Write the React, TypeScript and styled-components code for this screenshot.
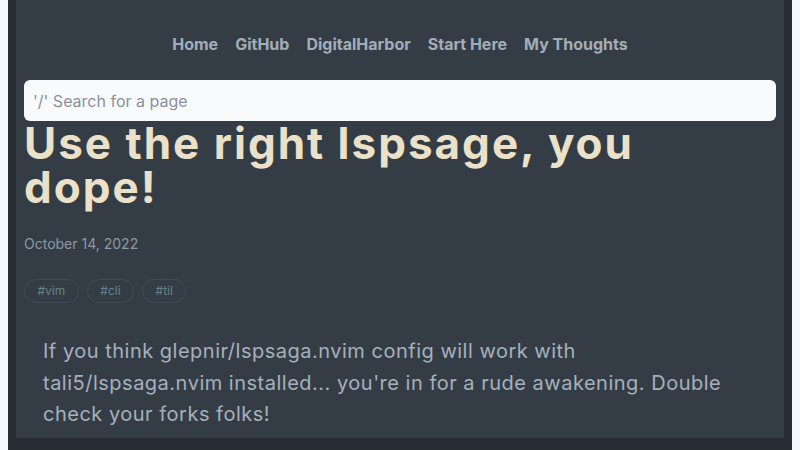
import React from 'react'
import styled, { createGlobalStyle } from 'styled-components'

// Page-wide defaults.
const GlobalStyle = createGlobalStyle`
    html,
    body {
        margin: 0;
        padding: 0;
    }

    body {
        margin: 0 8px;
        background-color: #f0f8ff;
        font-family: Inter, 'Noto Sans', sans-serif;
    }
`

// Dark frame around the page.
const Frame = styled.div`
    min-height: 100vh;
    padding: 0 8px 12px;
    background-color: #262c32;
`

// Main content panel.
const Panel = styled.main`
    padding: 0 8px 7px;
    background-color: #343d46;
`

const Nav = styled.nav`
    display: flex;
    justify-content: center;
    gap: 17px;
    padding-top: 32px;
    margin-bottom: 24px;
`

const NavLink = styled.a`
    color: #a3adb9;
    font-size: 16px;
    font-weight: 700;
    line-height: 24px;
    text-decoration: none;
`

const Search = styled.input`
    display: block;
    box-sizing: border-box;
    width: 100%;
    height: 41px;
    padding: 0 9px;
    border: none;
    border-radius: 6px;
    background-color: #f8fafc;
    font-family: inherit;
    font-size: 16px;
    color: #333;
    outline: none;

    &::placeholder {
        color: #8a9199;
    }
`

const Title = styled.h1`
    margin: 0;
    max-width: 700px;
    color: #ebe0c8;
    font-size: 44px;
    font-weight: 700;
    line-height: 44px;
    letter-spacing: 2px;
`

const DateLine = styled.div`
    margin-top: 25px;
    color: #8e98a4;
    font-size: 14px;
    line-height: 20px;
`

const Tags = styled.div`
    display: flex;
    gap: 8px;
    margin-top: 25px;
`

const Tag = styled.span`
    box-sizing: border-box;
    height: 24px;
    padding: 0 12.5px;
    border: 1px solid #414c56;
    border-radius: 12px;
    color: #65838d;
    font-size: 12px;
    line-height: 22px;
`

const Body = styled.p`
    margin: 33px 40px 0 19px;
    color: #a6b0bc;
    font-size: 20px;
    line-height: 31.5px;
    letter-spacing: 0.5px;
`

const links = ['Home', 'GitHub', 'DigitalHarbor', 'Start Here', 'My Thoughts']
const tags = ['vim', 'cli', 'til']

export default function App(): JSX.Element {
    return (
        <>
            <GlobalStyle />
            <Frame>
                <Panel>
                    <Nav>
                        {links.map((l) => (
                            <NavLink key={l} href="#">
                                {l}
                            </NavLink>
                        ))}
                    </Nav>
                    <Search placeholder="'/' Search for a page" />
                    <Title>Use the right lspsage, you dope!</Title>
                    <DateLine>October 14, 2022</DateLine>
                    <Tags>
                        {tags.map((t) => (
                            <Tag key={t}>#{t}</Tag>
                        ))}
                    </Tags>
                    <Body>
                        If you think glepnir/lspsaga.nvim config will work with
                        tali5/lspsaga.nvim installed... you're in for a rude
                        awakening. Double check your forks folks!
                    </Body>
                </Panel>
            </Frame>
        </>
    )
}
